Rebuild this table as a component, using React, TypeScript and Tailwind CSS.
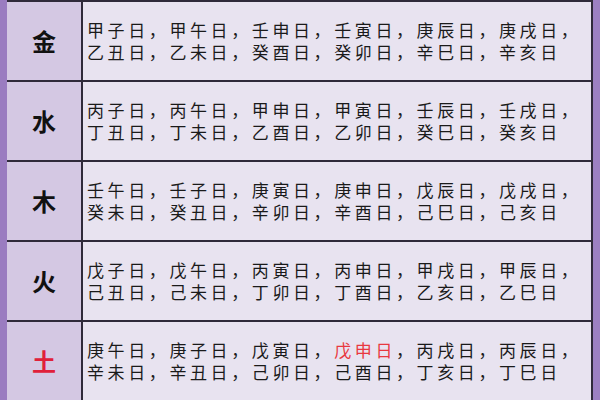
import React from "react";

type Row = { label: string; red?: boolean; lines: [React.ReactNode, React.ReactNode] };

const rows: Row[] = [
  {
    label: "金",
    lines: ["甲子日，甲午日，壬申日，壬寅日，庚辰日，庚戌日，", "乙丑日，乙未日，癸酉日，癸卯日，辛巳日，辛亥日"],
  },
  {
    label: "水",
    lines: ["丙子日，丙午日，甲申日，甲寅日，壬辰日，壬戌日，", "丁丑日，丁未日，乙酉日，乙卯日，癸巳日，癸亥日"],
  },
  {
    label: "木",
    lines: ["壬午日，壬子日，庚寅日，庚申日，戊辰日，戊戌日，", "癸未日，癸丑日，辛卯日，辛酉日，己巳日，己亥日"],
  },
  {
    label: "火",
    lines: ["戊子日，戊午日，丙寅日，丙申日，甲戌日，甲辰日，", "己丑日，己未日，丁卯日，丁酉日，乙亥日，乙巳日"],
  },
  {
    label: "土",
    red: true,
    lines: [
      <>
        庚午日，庚子日，戊寅日，<span className="text-[#e8383f]">戊申日</span>，丙戌日，丙辰日，
      </>,
      "辛未日，辛丑日，己卯日，己酉日，丁亥日，丁巳日",
    ],
  },
];

export default function App() {
  return (
    <div
      className="w-[600px] h-[400px] overflow-hidden flex bg-[#9c80c2]"
      style={{ fontFamily: '"Noto Sans CJK SC", "Noto Sans", sans-serif' }}
    >
      <div className="w-[7px] shrink-0 bg-[#9a7cc0]" />
      <div className="w-[586px] shrink-0 flex flex-col border-t-2 border-r-2 border-[#2f2a3a]">
        {rows.map((r, idx) => (
          <div key={idx} className="h-[80px] shrink-0 flex border-b-2 border-[#2f2a3a]">
            <div className="w-[76px] shrink-0 flex items-center justify-center bg-[#d4c8e3] border-r-2 border-[#2f2a3a]">
              <span
                className={`text-[24px] font-bold leading-none ${r.red ? "text-[#e0203a]" : "text-[#111]"}`}
              >
                {r.label}
              </span>
            </div>
            <div className="flex-1 flex flex-col justify-center pl-[4px] bg-[#e8e3f0] text-[17px] leading-[22px] tracking-[3.6px] text-[#1a1a1a]">
              <div className="whitespace-nowrap">{r.lines[0]}</div>
              <div className="whitespace-nowrap">{r.lines[1]}</div>
            </div>
          </div>
        ))}
      </div>
      <div className="w-[7px] shrink-0 bg-[#9c80c2]" />
    </div>
  );
}
